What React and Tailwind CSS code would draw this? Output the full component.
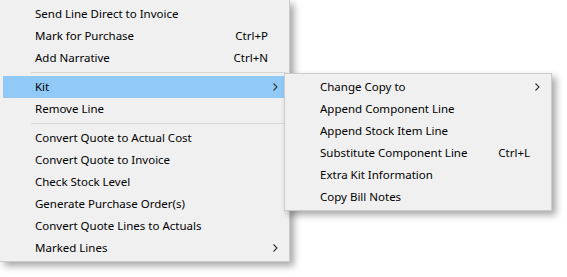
import React from "react";

const mainItems = [
  { label: "Send Line Direct to Invoice" },
  { label: "Mark for Purchase", shortcut: "Ctrl+P" },
  { label: "Add Narrative", shortcut: "Ctrl+N" },
  { sep: true },
  { label: "Kit", sub: true, active: true },
  { label: "Remove Line" },
  { sep: true },
  { label: "Convert Quote to Actual Cost" },
  { label: "Convert Quote to Invoice" },
  { label: "Check Stock Level" },
  { label: "Generate Purchase Order(s)" },
  { label: "Convert Quote Lines to Actuals" },
  { label: "Marked Lines", sub: true },
];

const kitItems = [
  { label: "Change Copy to", sub: true },
  { label: "Append Component Line" },
  { label: "Append Stock Item Line" },
  { label: "Substitute Component Line", shortcut: "Ctrl+L" },
  { label: "Extra Kit Information" },
  { label: "Copy Bill Notes" },
];

function Chevron() {
  return (
    <svg width="5" height="8" viewBox="0 0 5 8" className="ml-[5px]">
      <path d="M0.5 0.5 L4 4 L0.5 7.5" fill="none" stroke="#333" strokeWidth="1.1" />
    </svg>
  );
}

function MenuRow({ item }) {
  if (item.sep) {
    return (
      <div className="h-[7px] flex items-center pl-[28px] mx-[3px]">
        <div className="h-px w-full bg-[#d7d7d7]" />
      </div>
    );
  }
  return (
    <div className={`${item.active ? "bg-[#91c9f7]" : ""} flex items-center h-[22px] mx-[3px] pl-[32px] text-black`}>
      <span className="flex-1 whitespace-nowrap">{item.label}</span>
      {item.shortcut && <span className="whitespace-nowrap">{item.shortcut}</span>}
      <span className="w-[18px] flex items-center">{item.sub && <Chevron />}</span>
    </div>
  );
}

export default function App() {
  return (
    <div className="relative w-[567px] h-[277px] bg-white overflow-hidden text-[11.5px] font-['Segoe_UI','Noto_Sans',sans-serif]">
      <div className="w-[290px] bg-[#f0f0f0] border-r border-b border-[#cccccc] pt-[3px] pb-[2px] shadow-[4px_4px_7px_rgba(0,0,0,0.35)]">
        {mainItems.map((item, i) => (
          <MenuRow key={i} item={item} />
        ))}
      </div>
      <div className="absolute left-[284px] top-[73px] w-[268px] bg-[#f0f0f0] border border-[#cccccc] py-[2px] shadow-[4px_4px_7px_rgba(0,0,0,0.35)]">
        {kitItems.map((item, i) => (
          <MenuRow key={i} item={item} />
        ))}
      </div>
    </div>
  );
}
